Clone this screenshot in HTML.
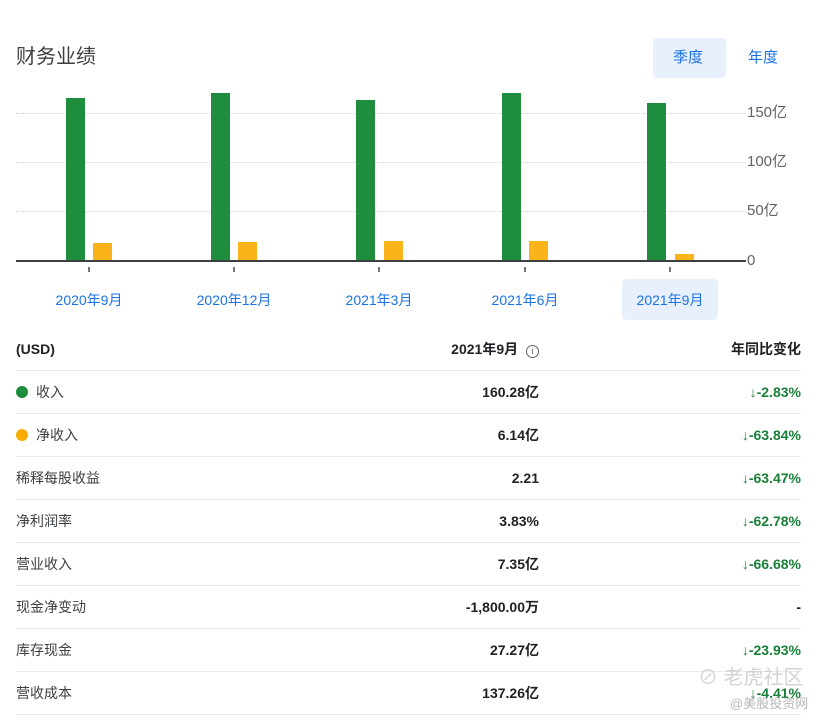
<!DOCTYPE html>
<html><head><meta charset="utf-8"><style>
body{margin:0;width:829px;height:720px;background:#fff;font-family:"Liberation Sans","Noto Sans CJK SC",sans-serif;position:relative;overflow:hidden;color:#202124}
.a{position:absolute}
.g{position:absolute;left:16px;width:730px;border-top:1px dotted #d0d0d0;height:0}
.yl{position:absolute;left:747px;font-size:15px;line-height:20px;color:#5f6368}
.gb{position:absolute;width:19px;background:#1e8e3e}
.ob{position:absolute;width:19px;background:#f9ab00;opacity:.9}
.tk{position:absolute;top:267px;width:2px;height:5px;background:#777}
.xl{position:absolute;top:290px;font-size:14px;line-height:20px;color:#1a73e8;width:110px;text-align:center}
.row{position:absolute;left:16px;width:785px;height:42px;border-bottom:1px solid #e8eaed;font-size:14px}
.row>span{position:absolute;top:11px;line-height:20px;height:20px;white-space:nowrap}
.c1{left:0;color:#3c4043}
.c2{right:262px;font-weight:bold;color:#202124}
.c3{right:0;color:#188038;font-weight:bold}
.dot{display:inline-block;width:12px;height:12px;border-radius:50%;margin-right:8px;vertical-align:-1px}
</style></head><body>
<div class="a" style="left:16px;top:44px;font-size:20px;line-height:26px;color:#3c4043">财务业绩</div>
<div class="a" style="left:653px;top:38px;width:73px;height:40px;background:#e8f0fe;border-radius:4px"></div>
<div class="a" style="left:673px;top:48px;font-size:15px;line-height:20px;color:#1a73e8">季度</div>
<div class="a" style="left:748px;top:48px;font-size:15px;line-height:20px;color:#1a73e8">年度</div>

<div class="g" style="top:113px"></div><div class="g" style="top:162px"></div><div class="g" style="top:211px"></div>
<div class="yl" style="top:103px">150亿</div><div class="yl" style="top:152px">100亿</div><div class="yl" style="top:201px">50亿</div><div class="yl" style="top:251px">0</div>
<div class="gb" style="left:66px;top:98px;height:163px"></div><div class="ob" style="left:93px;top:243px;height:18px"></div>
<div class="gb" style="left:211px;top:93px;height:168px"></div><div class="ob" style="left:238px;top:242px;height:19px"></div>
<div class="gb" style="left:356px;top:100px;height:161px"></div><div class="ob" style="left:384px;top:241px;height:20px"></div>
<div class="gb" style="left:502px;top:93px;height:168px"></div><div class="ob" style="left:529px;top:241px;height:20px"></div>
<div class="gb" style="left:647px;top:103px;height:158px"></div><div class="ob" style="left:675px;top:254px;height:7px"></div>
<div class="a" style="left:16px;top:260px;width:730px;height:2px;background:#3c4043"></div>
<div class="tk" style="left:88px"></div><div class="tk" style="left:233px"></div><div class="tk" style="left:378px"></div><div class="tk" style="left:524px"></div><div class="tk" style="left:669px"></div>
<div class="a" style="left:622px;top:279px;width:96px;height:41px;background:#e8f0fe;border-radius:4px"></div>
<div class="xl" style="left:34px">2020年9月</div><div class="xl" style="left:179px">2020年12月</div><div class="xl" style="left:324px">2021年3月</div><div class="xl" style="left:470px">2021年6月</div><div class="xl" style="left:615px">2021年9月</div>

<div class="row" style="top:328px"><span class="c1" style="font-weight:bold;color:#202124">(USD)</span><span class="c2">2021年9月 <span style="display:inline-block;width:11px;height:11px;border:1.5px solid #5f6368;border-radius:50%;font-size:9px;line-height:11px;text-align:center;color:#5f6368;margin-left:4px;font-weight:normal;vertical-align:0">i</span></span><span class="c3" style="color:#202124">年同比变化</span></div>
<div class="row" style="top:371px"><span class="c1"><i class="dot" style="background:#1e8e3e"></i>收入</span><span class="c2">160.28亿</span><span class="c3">↓-2.83%</span></div>
<div class="row" style="top:414px"><span class="c1"><i class="dot" style="background:#f9ab00"></i>净收入</span><span class="c2">6.14亿</span><span class="c3">↓-63.84%</span></div>
<div class="row" style="top:457px"><span class="c1">稀释每股收益</span><span class="c2">2.21</span><span class="c3">↓-63.47%</span></div>
<div class="row" style="top:500px"><span class="c1">净利润率</span><span class="c2">3.83%</span><span class="c3">↓-62.78%</span></div>
<div class="row" style="top:543px"><span class="c1">营业收入</span><span class="c2">7.35亿</span><span class="c3">↓-66.68%</span></div>
<div class="row" style="top:586px"><span class="c1">现金净变动</span><span class="c2">-1,800.00万</span><span class="c3" style="color:#202124">-</span></div>
<div class="row" style="top:629px"><span class="c1">库存现金</span><span class="c2">27.27亿</span><span class="c3">↓-23.93%</span></div>
<div class="row" style="top:672px"><span class="c1">营收成本</span><span class="c2">137.26亿</span><span class="c3">↓-4.41%</span></div>
<div class="a" style="left:698px;top:661px;font-size:20px;color:rgba(200,200,200,.8)">⊘ 老虎社区</div>
<div class="a" style="left:730px;top:693px;font-size:13px;color:rgba(170,170,170,.85)">@美股投资网</div>
</body></html>
